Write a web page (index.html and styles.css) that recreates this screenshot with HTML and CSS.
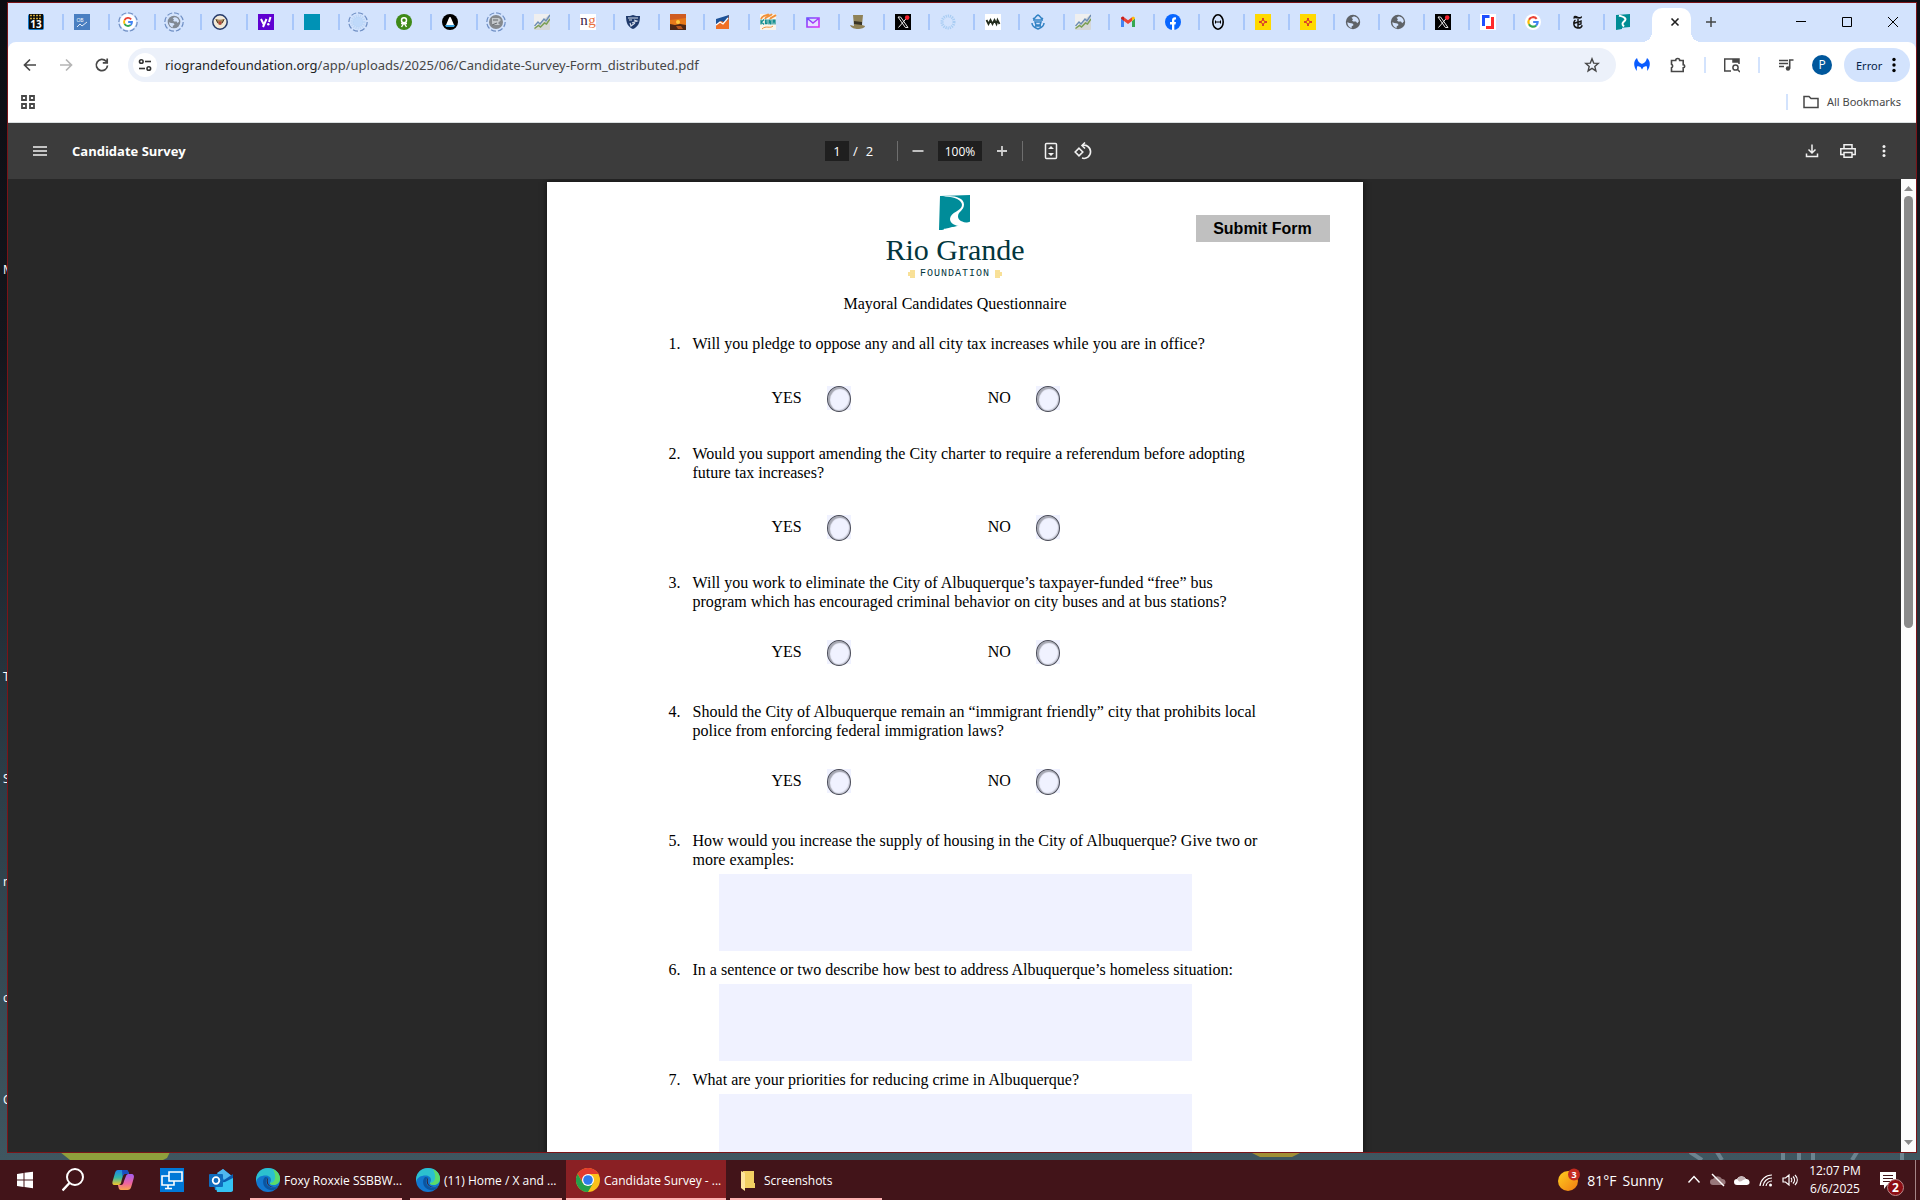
FILE: index.html
```html
<!DOCTYPE html>
<html lang="en">
<head>
  <meta charset="utf-8">
  <title>Candidate Survey</title>
  <link rel="stylesheet" href="styles.css">
</head>
<body>
  <!-- shared icons -->
  <svg class="defs" aria-hidden="true">
    <symbol id="ring" viewBox="0 0 20 20"><circle cx="10" cy="10" r="9.2" fill="none" stroke="#6f8fc4" stroke-width="1.2" stroke-dasharray="5.2 2"/></symbol>
    <symbol id="globe" viewBox="0 0 16 16"><circle cx="8" cy="8" r="7.2" fill="#5f6368"/><path d="M2.3 8.3 4.5 9l3 .4L8.600 11l-2 1.400v1.800C3.900 13.500 2.400 11 2.300 8.300zM8.500 2.500l-2 1.300L8 5.200 7 6.500l1.300 1H11l1.200 1.700 1.600-1.700C13.700 4.700 11.500 2.500 8.500 2.500z" fill="#d3e3fd"/></symbol>
    <symbol id="google" viewBox="0 0 16 16"><g fill="none" stroke-width="2.500"><path d="M12.200 4.400A5.300 5.300 0 0 0 3.400 5.500" stroke="#ea4335"/><path d="M3.400 5.500a5.300 5.300 0 0 0 0 5" stroke="#fbbc05"/><path d="M3.400 10.500a5.300 5.300 0 0 0 8.100 1.600" stroke="#34a853"/><path d="M11.500 12.100A5.300 5.300 0 0 0 13.300 8H8.200" stroke="#4285f4"/></g></symbol>
    <symbol id="chart" viewBox="0 0 16 16"><rect width="16" height="16" rx="1" fill="#d5d7d8"/><path d="M0 0h16L0 14z" fill="#efefef"/><path d="M.5 12 4 8l2 2 4-5 2 2 4-6" fill="none" stroke="#6b8db5" stroke-width="1.400"/><path d="m.5 14.500 4-3 2 1.500 4-4 2 1L16 5" fill="none" stroke="#7b9f55" stroke-width="1.500"/></symbol>
    <symbol id="x" viewBox="0 0 16 16"><rect width="16" height="16"/><path d="M3 3h2.600L13 13.500h-2.600zM12.500 3 3.500 13.500" fill="none" stroke="#e8e8e8"/><circle cx="12.200" cy="3.600" r="2.300" fill="#f4212e"/></symbol>
    <symbol id="zia" viewBox="0 0 16 16"><rect width="16" height="16" fill="#ffd900"/><path d="M8 4v2.500M8 9.500V12M4 8h2.500M9.500 8H12" stroke="#d9432a" stroke-width="2"/><circle cx="8" cy="8" r="1.800" fill="#ffd900" stroke="#d9432a"/></symbol>
    <symbol id="loader" viewBox="0 0 16 16"><circle cx="8" cy="8" r="6" fill="none" stroke="#a9cdf3" stroke-width="3" stroke-dasharray="1.200 .9"/></symbol>
    <symbol id="edge" viewBox="0 0 24 24"><circle cx="12" cy="12" r="12" fill="#1277cf"/><path d="M0 11C.5 4.500 5.500 0 12 0c7 0 12 5 12 10.500 0 4-3 6.500-6.500 6.500-2.500 0-3.500-1-3.500-2 0-.8 1-1.200 1-3C15 9 12.500 7.500 9.500 7.500 5 7.500 1 9.500 0 14z" fill="#2cc0cf"/><path d="M17 1.200C21.300 3.200 24 6.800 24 10.500c0 4-3 6.500-6.500 6.500-2.500 0-3.500-1-3.500-2 5 0 7-6 3-13.800z" fill="#5bdb6a"/><path d="M9 9c-4 4-1.500 12 5 13 3.500.6 6.500-1 8-3-6 2.500-12-.5-12-5.500 0-2 1-3.200 2-3.700C11 9 10 8.700 9 9z" fill="#0b55a0"/><path d="M12.300 9.800c-3 2-1.800 8.700 4.200 9.400 2.800.3 5.200-.3 6.300-1.200-2 1-3.800 1-5.300 1-5 0-7-5-5.200-9.200z" fill="#421419"/></symbol>
  </svg>

  <main class="desktop">
    <span class="shortcut s1">M</span>
    <span class="shortcut s2">T</span>
    <span class="shortcut s3">S</span>
    <span class="shortcut s4">m</span>
    <span class="shortcut s5">c</span>
    <span class="shortcut s6">C</span>
    <svg class="wallpaper" viewBox="0 0 1920 8" preserveAspectRatio="none" aria-hidden="true"><path d="M60 0h110l-3 6-4 2H70z" fill="#8f9f3c"/><path d="M1250 0h52l-10 5h-32z" fill="#a08f35"/><path d="m1690 0 12 8M1717 0l5 8M1783 0v8M1799 0v8M1813 0v8M1857 0l-5 8M1902 0v8" stroke="#6c8490" stroke-width="4"/></svg>

    <div class="window">
      <header class="tabs">
        <div class="tab-list">
          <button class="tab" aria-label="KRQE 13"><svg viewBox="0 0 16 16"><rect width="16" height="16" rx="2" fill="#1378c8"/><rect x="1" width="14" height="15" fill="#0c0c0c"/><path d="M2 1.500h12M2 4.500h12" stroke="#c9a43a" stroke-width="1.500" stroke-dasharray="2 1"/><text x="8" y="14" class="fav" font-size="10" font-weight="bold" fill="#fff">13</text></svg></button>
          <button class="tab" aria-label="Economics"><svg viewBox="0 0 16 16"><rect width="16" height="16" fill="#4a7fc1"/><text x="6" y="8" class="fav" font-size="5" fill="#fff">OB</text><path d="m3 13 3-3 2 2 5-4" fill="none" stroke="#dfe9f6"/></svg></button>
          <button class="tab" aria-label="Google"><svg viewBox="0 0 16 16"><circle cx="8" cy="8" r="8" fill="#fff"/><use href="#google" x="2" y="2" width="12" height="12"/><use href="#ring" x="-2" y="-2" width="20" height="20"/></svg></button>
          <button class="tab" aria-label="Web page"><svg viewBox="0 0 16 16"><use href="#globe" x="1" y="1" width="14" height="14" opacity=".7"/><use href="#ring" x="-2" y="-2" width="20" height="20"/></svg></button>
          <button class="tab" aria-label="House"><svg viewBox="0 0 16 16"><circle cx="8" cy="8" r="7.200" fill="#f3ead9" stroke="#263a68" stroke-width="1.500"/><path d="M3.500 5c2.500 0 3 1 4.500.5 1.500.5 2-.5 4.500-.5L11 8.500 9 11H7L5 8.500z" fill="#a98a5e"/><path d="M4 5.500 6 9M12 5.500 10 9" stroke="#4c3a25"/><path d="M6.700 7.500h2.600v2L8 11l-1.300-1.500z" fill="#b8423c"/></svg></button>
          <button class="tab" aria-label="Yahoo"><svg viewBox="0 0 16 16"><rect width="16" height="16" fill="#5f01d1"/><path d="m3 5 2.500 5M8.500 5 5 13" stroke="#fff" stroke-width="2"/><path d="m12.500 3-1.500 5" stroke="#fff" stroke-width="2"/><circle cx="10.300" cy="10.300" r="1.200" fill="#fff"/></svg></button>
          <button class="tab" aria-label="News"><svg viewBox="0 0 16 16"><rect width="16" height="16" fill="#0092b5"/></svg></button>
          <button class="tab" aria-label="Loading"><svg viewBox="0 0 16 16"><circle cx="8" cy="8" r="5" fill="#bfd9fa"/><use href="#loader" width="16" height="16" opacity=".5"/><use href="#ring" x="-2" y="-2" width="20" height="20"/></svg></button>
          <button class="tab" aria-label="Ballot"><svg viewBox="0 0 16 16"><circle cx="8" cy="8" r="8" fill="#3f8a18"/><circle cx="8" cy="6.200" r="2.500" fill="none" stroke="#fff" stroke-width="1.500"/><path d="M5 9.500h6M8 9l-2.500 4M8 9l2.500 4" stroke="#fff" stroke-width="1.400"/></svg></button>
          <button class="tab" aria-label="Capitol"><svg viewBox="0 0 16 16"><circle cx="8" cy="8" r="8"/><path d="M7.500 3h1l1 2 2.500 6H4l2.500-6z" fill="#fff"/><path d="M3 11h10l-1 2H4z" fill="#3aa2de"/></svg></button>
          <button class="tab" aria-label="Report"><svg viewBox="0 0 16 16"><circle cx="8" cy="8" r="7" fill="#85898d"/><path d="M4 4h7l2 2-3 3 2 2H4z" fill="#c4c8cb"/><path d="M5 6h5M4 11l5-2" stroke="#62666a"/><use href="#ring" x="-2" y="-2" width="20" height="20"/></svg></button>
          <button class="tab" aria-label="Stocks"><svg><use href="#chart"/></svg></button>
          <button class="tab" aria-label="NG"><svg viewBox="0 0 16 16"><rect width="16" height="16" fill="#fff"/><text x="4" y="11" class="fav serif" font-size="15" fill="#3a2346">n</text><text x="12" y="11" class="fav serif" font-size="15" fill="#e8703d">g</text></svg></button>
          <button class="tab" aria-label="Shield"><svg viewBox="0 0 16 16"><path d="M1 2c3 0 5 0 7-1 2 1 4 1 7 1 0 7-2 11-7 13C3 13 1 9 1 2z" fill="#1f3a6b"/><path d="M3 4h10M4 6h3M9 6l3 1-5 2M5 9l1 3 4-3" fill="none" stroke="#d6deec" stroke-width="1.200"/></svg></button>
          <button class="tab" aria-label="Sunset"><svg viewBox="0 0 16 16"><rect width="16" height="16" fill="#e7791b"/><path d="M0 0h16v4L0 6z" fill="#cf5c22"/><circle cx="8" cy="8" r="2" fill="#ffc93e"/><path d="M0 10l5 1 5-1 6 1v5H0z" fill="#4d2716"/><path d="M6 12h5l2 3H8z" fill="#b75620"/></svg></button>
          <button class="tab" aria-label="Growth"><svg viewBox="0 0 16 16"><path d="M1 7 14 1v14H1z" fill="#ef7027"/><path d="M1 5 14 1l-1 5-4 2-3-1-5 4z" fill="#1d5298"/><path d="m1 11 4-3 3 2 5-6" fill="none" stroke="#fff" stroke-width="1.300"/></svg></button>
          <button class="tab" aria-label="KUNM"><svg viewBox="0 0 16 16"><rect width="16" height="16" fill="#fbf5ea"/><path d="M1 5C3 0 8 2 9 0M5 5c1-3 5-2 7-5M10 5c1-2 4-2 6-4" fill="none" stroke="#f0913a" stroke-width="1.800"/><path d="M1 5.500v5M1.500 8 4 5.500M1.500 8 4 10.500M5.500 5.500v4h1.500v-4M9 10.500v-5l2 5v-5M13 10.500v-5l1 2 1-2v5" fill="none" stroke="#138f92" stroke-width="1.300"/><path d="M2 15c4-4 8 0 11-3" fill="none" stroke="#f0913a"/></svg></button>
          <button class="tab" aria-label="Mail"><svg viewBox="0 0 16 16"><defs><linearGradient id="mail" x2="1" y2="1"><stop stop-color="#6a4bff"/><stop offset="1" stop-color="#e02ff5"/></linearGradient></defs><path d="M2 4h12v9H2zM3 5l5 4 5-4" fill="#e6e0ff" stroke="url(#mail)" stroke-width="1.600"/></svg></button>
          <button class="tab" aria-label="Top hat"><svg viewBox="0 0 16 16"><path d="M3 1h10l-1 10 3 1c0 2-4 3-7 3s-7-1-8-4l4 1z" fill="#8f8257"/><path d="m4 7 8 1v3l-8-1z" fill="#383426"/></svg></button>
          <button class="tab" aria-label="X"><svg><use href="#x"/></svg></button>
          <button class="tab" aria-label="Loading"><svg><use href="#loader"/></svg></button>
          <button class="tab" aria-label="W"><svg viewBox="0 0 16 16"><rect width="16" height="16" fill="#fff"/><path d="m1.500 6 2 4 2-4 2 4 2-4 2 4 1-4 2 4" fill="none" stroke="#222c1c" stroke-width="1.800"/></svg></button>
          <button class="tab" aria-label="State"><svg viewBox="0 0 16 16"><path d="M3 4c2 2 2-2 5-3 3 1 3 5 5 3M3 6h10M2 9c0 4 4 5 6 6 2-1 6-2 6-6M5 8h6l-1 3H6zM5 12h6" fill="none" stroke="#3182c4" stroke-width="1.500"/></svg></button>
          <button class="tab" aria-label="Stocks"><svg><use href="#chart"/></svg></button>
          <button class="tab" aria-label="Gmail"><svg viewBox="0 0 16 16"><path d="M1 4.500V13h3V7z" fill="#4285f4"/><path d="M12 7v6h3V4.500z" fill="#34a853"/><path d="M1 4.500C1 3 3 2.300 4 3.200l4 3 4-3L12 7l-4 3-4-3v0z" fill="#ea4335"/><path d="M12 3.200c1-.9 3-.2 3 1.300L12 7z" fill="#fbbc04"/><path d="M4 3.200C3 2.300 1 3 1 4.500L4 7z" fill="#c5221f"/></svg></button>
          <button class="tab" aria-label="Facebook"><svg viewBox="0 0 16 16"><circle cx="8" cy="8" r="8" fill="#0866ff"/><path d="M7 16v-5.500H5V8h2V6.500C7 4 8.500 3 11 3.400v2.100C9.700 5.400 9.300 5.700 9.300 6.800V8H11l-.5 2.500H9.300V16z" fill="#fff"/></svg></button>
          <button class="tab" aria-label="Theta"><svg viewBox="0 0 16 16"><ellipse cx="8" cy="8" rx="5.200" ry="7.200" fill="none" stroke="#000" stroke-width="1.600"/><path d="M5.500 8h5" stroke="#000"/><path d="M5.500 6.500v3M10.500 6.500v3" stroke="#000"/></svg></button>
          <button class="tab" aria-label="New Mexico"><svg><use href="#zia"/></svg></button>
          <button class="tab" aria-label="New Mexico"><svg><use href="#zia"/></svg></button>
          <button class="tab" aria-label="Web page"><svg><use href="#globe"/></svg></button>
          <button class="tab" aria-label="Web page"><svg><use href="#globe"/></svg></button>
          <button class="tab" aria-label="X"><svg><use href="#x"/></svg></button>
          <button class="tab" aria-label="Brackets"><svg viewBox="0 0 16 16"><rect width="16" height="16" fill="#fff"/><path d="M9.500 2.500h-6v9.500" fill="none" stroke="#1f4fff" stroke-width="3"/><path d="M12.500 3v10.500H6" fill="none" stroke="#ff2a2a" stroke-width="3"/></svg></button>
          <button class="tab" aria-label="Google"><svg viewBox="0 0 16 16"><circle cx="8" cy="8" r="8" fill="#fff"/><use href="#google" x="1" y="1" width="14" height="14"/></svg></button>
          <button class="tab" aria-label="New York Times"><svg viewBox="0 0 16 16"><path d="M3.500 3c1-2 3-1 4.500-.3 1.500.6 3 .6 4-.7.3 2-1 3-3 2.700C7 4.300 4.500 3.500 3.500 5z" fill="#151515"/><path d="M5.500 6C3 7.500 3 13.500 7.500 14c2.500.3 4.200-1 4.700-2.800M8 5v9M8 8.300l3-1.300v3l-3 .7M3.500 9.500 8 8" fill="none" stroke="#151515" stroke-width="1.400"/></svg></button>
          <button class="tab last" aria-label="Rio Grande Foundation"><svg viewBox="0 0 16 16"><path d="M1 1 15 0v13l-8 .7L7 15l-6 1z" fill="#008c95"/><path d="M4 1.500c3 1 8 2 6 5-2 2-4 3-1 6" fill="none" stroke="#fff" stroke-width="2"/></svg></button>
        </div>
        <div class="tab-active"><button class="plain" aria-label="Close tab"><svg class="i10" viewBox="0 0 10 10"><path d="m1.500 1.500 7 7m0-7-7 7" stroke="#1f1f1f" stroke-width="1.600"/></svg></button></div>
        <button class="plain new-tab" aria-label="New tab"><svg class="i10" viewBox="0 0 10 10"><path d="M5 0v10M0 5h10" stroke="#444746" stroke-width="1.500"/></svg></button>
        <div class="window-controls">
          <button class="plain" aria-label="Minimize"><svg class="i10" viewBox="0 0 10 10"><path d="M0 4.500h10" stroke="#000"/></svg></button>
          <button class="plain" aria-label="Maximize"><svg class="i10" viewBox="0 0 10 10"><path d="M.5.5h9v9h-9z" fill="none" stroke="#000"/></svg></button>
          <button class="plain" aria-label="Close"><svg class="i10" viewBox="0 0 10 10"><path d="m0 0 10 10M10 0 0 10" stroke="#000"/></svg></button>
        </div>
      </header>

      <div class="browser-bar">
        <nav class="toolbar">
          <button class="tool" aria-label="Back"><svg viewBox="0 0 16 16"><path d="M14 8H3M8 2.500 2.500 8 8 13.500" fill="none" stroke="#474747" stroke-width="1.700"/></svg></button>
          <button class="tool" aria-label="Forward"><svg viewBox="0 0 16 16"><path d="M2 8h11M8 2.500 13.500 8 8 13.500" fill="none" stroke="#b5b5b5" stroke-width="1.700"/></svg></button>
          <button class="tool" aria-label="Reload"><svg viewBox="0 0 16 16"><path d="M13.500 8.500A5.600 5.600 0 1 1 12 4.200l1 1M13.200 1.500v4.300H8.800" fill="none" stroke="#474747" stroke-width="1.700"/></svg></button>
          <div class="omnibox">
            <button class="site-info" aria-label="Site information"><svg viewBox="0 0 16 16"><g fill="none" stroke="#333" stroke-width="1.600"><circle cx="4.300" cy="4.500" r="1.800"/><path d="M8 4.500h6"/><circle cx="11.800" cy="11.500" r="1.800"/><path d="M2 11.500h6"/></g></svg></button>
            <span class="url"><b>riograndefoundation.org</b>/app/uploads/2025/06/Candidate-Survey-Form_distributed.pdf</span>
            <button class="tool" aria-label="Bookmark this tab"><svg viewBox="0 0 16 16"><path d="m8 1.800 1.700 4.300 4.600.3-3.500 3 1.100 4.500L8 11.400l-3.900 2.500 1.100-4.500-3.500-3 4.600-.3z" fill="none" stroke="#474747" stroke-width="1.400"/></svg></button>
          </div>
          <button class="tool" aria-label="Malwarebytes"><svg viewBox="0 0 16 16"><path d="M3 1c1 4 3 5 5 6 2-1 4-2 5-6 4 3 3.500 9 0 13 .4-2 .2-4-.6-5L9.500 10 8 12.500 6.500 10 3.600 9c-.8 1-1 3-.6 5C-.5 10-1 4 3 1z" fill="#0a5cff"/></svg></button>
          <button class="tool" aria-label="Extensions"><svg viewBox="0 0 16 16"><path d="M1.500 3.500h4.200a2 2 0 0 1 4 0h3.500v4.200a1.500 1.500 0 0 1 0 3v3.800H1.500v-3.700a2 2 0 0 0 0-3.600z" fill="none" stroke="#474747" stroke-width="1.600"/></svg></button>
          <span class="sep"></span>
          <button class="tool" aria-label="Side panel search"><svg viewBox="0 0 16 16"><path d="M7 14H.7V2H15v5M9 2v3h6" fill="none" stroke="#474747" stroke-width="1.500"/><path d="M9 2h6v3H9z" fill="#474747"/><circle cx="11.500" cy="10.500" r="2.600" fill="none" stroke="#474747" stroke-width="1.500"/><path d="m13.500 12.500 2.500 2.500" stroke="#474747" stroke-width="1.500"/></svg></button>
          <span class="sep"></span>
          <button class="tool" aria-label="Media controls"><svg viewBox="0 0 16 16"><path d="M1 3.500h9M1 6.500h9M1 9.500h5" stroke="#474747" stroke-width="1.500"/><circle cx="10" cy="11.500" r="2.200" fill="#474747"/><path d="M11.700 11.500V3h3.800" fill="none" stroke="#474747" stroke-width="1.600"/></svg></button>
          <button class="tool" aria-label="Profile"><span class="avatar">P</span></button>
          <button class="error">Error <svg viewBox="0 0 4 16"><circle cx="2" cy="2.500" r="1.700"/><circle cx="2" cy="8" r="1.700"/><circle cx="2" cy="13.500" r="1.700"/></svg></button>
        </nav>
        <nav class="bookmarks">
          <button class="plain" aria-label="Apps"><svg class="i14" viewBox="0 0 14 14"><path d="M1 1h4v4H1zM9 1h4v4H9zM1 9h4v4H1zM9 9h4v4H9z" fill="none" stroke="#474747" stroke-width="1.800"/></svg></button>
          <button class="all-bookmarks"><svg viewBox="0 0 16 14"><path d="M1 12.500V1.500h5l2 2h7v9z" fill="none" stroke="#474747" stroke-width="1.500"/></svg>All Bookmarks</button>
        </nav>
      </div>

      <div class="pdf-bar">
        <div class="pdf-title">
          <button class="plain" aria-label="Menu"><svg class="i14" viewBox="0 0 14 14"><path d="M0 3h14M0 7h14M0 11h14" stroke="#f1f1f1" stroke-width="1.500"/></svg></button>
          <h1>Candidate Survey</h1>
        </div>
        <div class="pdf-center">
          <input class="box page-no" type="text" value="1" aria-label="Page number">
          <span class="page-count"><span>/</span><span>2</span></span>
          <span class="line"></span>
          <button class="pdf-btn minus" aria-label="Zoom out"><svg viewBox="0 0 20 20"><path d="M4.500 10h11" stroke="#d0d0d0" stroke-width="1.800"/></svg></button>
          <input class="box zoom" type="text" value="100%" aria-label="Zoom level">
          <button class="pdf-btn plus" aria-label="Zoom in"><svg viewBox="0 0 20 20"><path d="M5 10h10M10 5v10" stroke="#d0d0d0" stroke-width="1.800"/></svg></button>
          <span class="line wide"></span>
          <button class="pdf-btn" aria-label="Fit to page"><svg viewBox="0 0 20 20"><rect x="4.500" y="2.500" width="11" height="15" rx="1" fill="none" stroke="#f1f1f1" stroke-width="1.500"/><path d="m7 8 3-3 3 3zM7 12l3 3 3-3z" fill="#f1f1f1"/></svg></button>
          <button class="pdf-btn" aria-label="Rotate"><svg viewBox="0 0 20 20"><path d="m6 7.200 3.800 3.800L6 14.800 2.200 11z" fill="none" stroke="#f1f1f1" stroke-width="1.600"/><path d="M9 4.500a6.600 6.600 0 1 1 0 12.600M12 1.500l-3 3 3 3" fill="none" stroke="#f1f1f1" stroke-width="1.600"/></svg></button>
        </div>
        <div class="pdf-actions">
          <button class="tool" aria-label="Download"><svg viewBox="0 0 16 16"><path d="M8 1.500v8M4.500 6.500 8 10l3.500-3.500M2.500 10.500v3h11v-3" fill="none" stroke="#f1f1f1" stroke-width="1.500"/></svg></button>
          <button class="tool" aria-label="Print"><svg viewBox="0 0 16 16"><path d="M4 5V1.700h8V5M4 11.500H.8V5.700h14.400v5.800H12M4 9.500h8v4.800H4z" fill="none" stroke="#f1f1f1" stroke-width="1.500"/></svg></button>
          <button class="tool" aria-label="More actions"><svg viewBox="0 0 16 16" fill="#f1f1f1"><circle cx="8" cy="3.500" r="1.500"/><circle cx="8" cy="8" r="1.500"/><circle cx="8" cy="12.500" r="1.500"/></svg></button>
        </div>
      </div>

      <div class="viewer">
        <div class="pages">
          <form class="page">
            <div class="page-head">
              <div class="logo">
                <svg class="logo-mark" viewBox="0 0 31 35"><path d="M1 1 31 0v27l-16 5-2 0 0 1.500-8 .2L5 35H0z" fill="#008c99"/><path d="M31 26.500V35H3l10-3 12-.8z" fill="#fff"/><path d="M4 1.500C15 1 23 5 23 10c0 6-12 7-12 14 0 5 7 8 14 7l6-3.500c-7 .5-12-2-12-6 0-5 6-6 6-12C25 3 15 0 4 1.500z" fill="#fff"/></svg>
                <span class="logo-name">Rio Grande</span>
                <span class="logo-sub">
                  <svg viewBox="0 0 7 8"><path d="M2 1h5M0 3h7M0 5h7M2 7h5" stroke="#f2c230"/></svg>
                  <span>FOUNDATION</span>
                  <svg viewBox="0 0 7 8"><path d="M0 1h5M0 3h7M0 5h7M0 7h5" stroke="#f2c230"/></svg>
                </span>
              </div>
              <button class="submit" type="button">Submit Form</button>
            </div>
            <h2>Mayoral Candidates Questionnaire</h2>
            <ol class="questions">
              <li><p>Will you pledge to oppose any and all city tax increases while you are in office?</p>
                <div class="answer"><label>YES <input type="radio" name="q1"></label><label>NO <input type="radio" name="q1"></label></div></li>
              <li><p>Would you support amending the City charter to require a referendum before adopting future tax increases?</p>
                <div class="answer"><label>YES <input type="radio" name="q2"></label><label>NO <input type="radio" name="q2"></label></div></li>
              <li><p>Will you work to eliminate the City of Albuquerque’s taxpayer-funded “free” bus program which has encouraged criminal behavior on city buses and at bus stations?</p>
                <div class="answer"><label>YES <input type="radio" name="q3"></label><label>NO <input type="radio" name="q3"></label></div></li>
              <li><p>Should the City of Albuquerque remain an “immigrant friendly” city that prohibits local police from enforcing federal immigration laws?</p>
                <div class="answer"><label>YES <input type="radio" name="q4"></label><label>NO <input type="radio" name="q4"></label></div></li>
              <li><label for="q5">How would you increase the supply of housing in the City of Albuquerque? Give two or more examples:</label>
                <textarea id="q5"></textarea></li>
              <li><label for="q6">In a sentence or two describe how best to address Albuquerque’s homeless situation:</label>
                <textarea id="q6"></textarea></li>
              <li><label for="q7">What are your priorities for reducing crime in Albuquerque?</label>
                <textarea id="q7"></textarea></li>
            </ol>
          </form>
        </div>
        <div class="scrollbar">
          <svg viewBox="0 0 15 17"><path d="M3 12h9L7.500 7z" fill="#8b8b8b"/></svg>
          <div class="track"><div class="thumb"></div></div>
          <svg viewBox="0 0 15 17"><path d="M3 5h9l-4.500 5z" fill="#8b8b8b"/></svg>
        </div>
      </div>
    </div>
  </main>

  <footer class="taskbar">
    <button class="task-icon" aria-label="Start"><svg viewBox="0 0 24 24"><path d="m4 6 6.500-1v6.500H4zM11.500 4.800 20 3.700v7.800h-8.500zM4 12.500h6.500V19L4 18zM11.500 12.500H20v7.800l-8.500-1.200z" fill="#fff"/></svg></button>
    <button class="task-icon" aria-label="Search"><svg viewBox="0 0 24 24"><circle cx="13" cy="9" r="8" fill="none" stroke="#fff" stroke-width="2"/><path d="m7.500 15-7 7.500" stroke="#fff" stroke-width="2.400"/></svg></button>
    <button class="task-icon" aria-label="Copilot"><svg viewBox="0 0 24 24"><defs><linearGradient id="cp1" x2="0" y2="1"><stop stop-color="#1c86e8"/><stop offset=".5" stop-color="#35b8a4"/><stop offset="1" stop-color="#f5c52a"/></linearGradient><linearGradient id="cp2" x2="0" y2="1"><stop stop-color="#a35df0"/><stop offset=".6" stop-color="#f0659c"/><stop offset="1" stop-color="#f8a44c"/></linearGradient></defs><path d="M7 2h8c2 0 2.500 2 3 4h-4c-2 0-2 2-3 5l-1 4c-1 2-2 2-4 2H4c-3 0-3-2-2-5l2-7c.6-2 1.500-3 3-3z" fill="url(#cp1)"/><path d="M18 6h2c3 0 3.500 2 2.500 5l-2 7c-.8 3-2 4-4 4H10c-2 0-2.500-2-3-5h3c2 0 2.500-2 3-4l2-5c.5-1.500 1.500-2 3-2z" fill="url(#cp2)"/><path d="M11 2h4c2 0 2.500 2 3 4h-4c-2 0-2 2-2.500 3z" fill="#1b4dbf"/></svg></button>
    <button class="task-icon" aria-label="Remote desktop"><svg viewBox="0 0 24 24"><rect width="24" height="24" fill="#0078d7"/><path d="M2 8h12v9H2zM8 17v3M5 20.500h7" fill="none" stroke="#fff" stroke-width="1.600"/><path d="M9 4h13v9H9z" fill="#0078d7" stroke="#fff" stroke-width="1.600"/></svg></button>
    <button class="task-icon" aria-label="Outlook"><svg viewBox="0 0 24 24"><path d="M4 9 14 1l10 8v13H6z" fill="#1490df"/><path d="M8 5 14 1l10 8-6 5z" fill="#50b8f0"/><path d="M12 14 24 6v17H8z" fill="#0a5cb0"/><path d="m6 15 10-1 8-4v12c0 1-1 2-2 2H8z" fill="#35c3f3"/><rect y="6" width="14" height="13" rx="1" fill="#0f6cbd"/><circle cx="7" cy="12.500" r="3.300" fill="none" stroke="#fff" stroke-width="1.800"/></svg></button>
    <div class="apps">
      <button class="app"><svg><use href="#edge"/></svg>Foxy Roxxie SSBBW...</button>
      <button class="app"><svg><use href="#edge"/></svg>(11) Home / X and ...</button>
      <button class="app current"><svg viewBox="0 0 24 24"><circle cx="12" cy="12" r="12" fill="#fbc11a"/><path d="M1.600 6A12 12 0 0 1 22.400 6H12l-5 9z" fill="#e33b2e"/><path d="M1.600 6A12 12 0 0 0 12 24l5.200-9H6.800z" fill="#25a04b"/><circle cx="12" cy="12" r="6" fill="#fff"/><circle cx="12" cy="12" r="4.800" fill="#2f7bea"/></svg>Candidate Survey - ...</button>
      <button class="app"><svg viewBox="0 0 24 24"><path d="M7 3h11v12h1v5H7z" fill="#f3cf62"/><path d="m5 3 4 2v18l-4-3z" fill="#ffe59c"/></svg>Screenshots</button>
    </div>
    <div class="tray">
      <button class="weather"><svg viewBox="0 0 24 24"><defs><linearGradient id="sun" x2="1" y2="1"><stop stop-color="#ffce1f"/><stop offset="1" stop-color="#f07c12"/></linearGradient></defs><circle cx="11" cy="13" r="10" fill="url(#sun)"/><circle cx="17" cy="6.500" r="6" fill="#c42b20"/><text x="17" y="9.500" class="fav" font-size="9" font-weight="bold" fill="#fff">3</text></svg><span>81°F</span><span>Sunny</span></button>
      <div class="tray-icons">
        <svg viewBox="0 0 16 16"><path d="m2.500 10.500 5.500-6 5.500 6" fill="none" stroke="#fff" stroke-width="1.400"/></svg>
        <svg viewBox="0 0 16 16"><path d="M3 13a3 3 0 0 1 0-6 5 5 0 0 1 9 0 3 3 0 0 1 1 6z" fill="#98787b"/><path d="m2 2 12 12" stroke="#fff" stroke-width="1.400"/></svg>
        <svg viewBox="0 0 16 16"><path d="M3 13a3 3 0 0 1 0-6 5 5 0 0 1 9 0 3 3 0 0 1 1 6z" fill="#fff"/><path d="M3 7a5 5 0 0 1 9 0c-3 0-4 3-7 2.500z" fill="#c5b5b7"/></svg>
        <svg viewBox="0 0 16 16"><g fill="none" stroke="#fff" stroke-width="1.200"><path d="M2 14A12 12 0 0 1 14 3M5 14a9 9 0 0 1 9-8M8 14a6 6 0 0 1 6-5"/></g><circle cx="12.500" cy="13" r="1.500" fill="#fff"/></svg>
        <svg viewBox="0 0 16 16"><path d="M1 6h2.500L7 3v10l-3.500-3H1zM9 6c1 1 1 3 0 4M11 4.500c2 2 2 5 0 7M13 3c3 3 3 7 0 10" fill="none" stroke="#fff" stroke-width="1.200"/></svg>
      </div>
      <div class="clock">12:07 PM<br>6/6/2025</div>
      <button class="notices" aria-label="Notifications"><svg viewBox="0 0 24 24"><path d="M0 0h16v13H7l-3 4v-4H0z" fill="#fff"/><path d="M3 3.500h10M3 6.500h10M3 9.500h7" stroke="#421419" stroke-width="1.200"/><circle cx="15.500" cy="15.500" r="8" fill="#8d0d13" stroke="#b9898c"/><text x="15.500" y="20" class="fav" font-size="12" font-weight="bold" fill="#fff">2</text></svg></button>
    </div>
  </footer>
</body>
</html>
```
FILE: styles.css
```css
* {
  box-sizing: border-box;
}

body {
  margin: 0;
  height: 100vh;
  display: flex;
  flex-direction: column;
  overflow: hidden;
  font-family: "Open Sans", "Noto Sans", sans-serif;
  font-size: 12px;
}

button {
  border: 0;
  padding: 0;
  background: none;
  font: inherit;
  color: inherit;
}

svg {
  display: block;
  flex: none;
}

.defs {
  position: absolute;
  width: 0;
  height: 0;
}

.fav {
  font-family: "Open Sans", sans-serif;
  text-anchor: middle;
}

.fav.serif {
  font-family: "Liberation Serif", serif;
}

/* desktop */
.desktop {
  flex: 1;
  min-height: 0;
  position: relative;
  display: flex;
  padding: 2px 3px 7px 7px;
  background: linear-gradient(#0b0c12, #14161c 30%, #2b3b45 65%, #3f5660);
}

.shortcut {
  position: absolute;
  left: 3px;
  color: #fff;
  line-height: 16px;
}

.s1 { top: 262px; }
.s2 { top: 669px; }
.s3 { top: 771px; }
.s4 { top: 874px; }
.s5 { top: 990px; }
.s6 { top: 1092px; }

.wallpaper {
  position: absolute;
  left: 0;
  bottom: 0;
  width: 100%;
  height: 8px;
}

.window {
  position: relative;
  flex: 1;
  min-width: 0;
  display: flex;
  flex-direction: column;
  border: 1px solid #7a1418;
  background: #282828;
}

/* tab strip */
.tabs {
  height: 39px;
  display: flex;
  align-items: center;
  padding: 0 0 1px 10px;
  background: #d3e3fd;
}

.tab-list {
  display: flex;
}

.tab {
  width: 45px;
  height: 16px;
  padding-left: 10px;
  border-right: 2px solid #a8c7fa;
}

.tab:nth-child(-n+12) {
  width: 46px;
}

.tab.last {
  border-right-color: transparent;
}

.tab svg {
  width: 16px;
  height: 16px;
  overflow: visible;
}

.plain {
  display: flex;
  align-items: center;
  justify-content: center;
}

.i10 {
  width: 10px;
  height: 10px;
}

.i14 {
  width: 14px;
  height: 14px;
}

.tab-active {
  position: relative;
  align-self: flex-end;
  width: 39px;
  height: 34px;
  margin: 0 0 -1px 2px;
  padding: 9px 0 0 18px;
  border-radius: 10px 10px 0 0;
  background: #fff;
}

.tab-active::before,
.tab-active::after {
  content: "";
  position: absolute;
  bottom: 0;
  left: -10px;
  width: 10px;
  height: 10px;
  background: radial-gradient(circle at 0 0, transparent 10px, #fff 10px);
}

.tab-active::after {
  left: 100%;
  background: radial-gradient(circle at 100% 0, transparent 10px, #fff 10px);
}

.new-tab {
  width: 40px;
}

.window-controls {
  margin-left: auto;
  display: flex;
}

.window-controls .plain {
  width: 46px;
}

/* address bar */
.browser-bar {
  background: linear-gradient(#d3e3fd 10px, #fff 10px);
  border-bottom: 1px solid #dadfe0;
}

.toolbar {
  height: 46px;
  display: flex;
  align-items: center;
  padding: 0 6px 0 4px;
  border-radius: 8px 8px 0 0;
  background: #fff;
}

.tool {
  width: 36px;
  height: 34px;
  display: flex;
  align-items: center;
  justify-content: center;
}

.tool svg {
  width: 16px;
  height: 16px;
}

.omnibox {
  flex: 1;
  display: flex;
  align-items: center;
  height: 34px;
  margin: 0 8px;
  padding: 0 6px 0 5px;
  border-radius: 17px;
  background: #ecf1fa;
}

.site-info {
  width: 24px;
  height: 24px;
  display: flex;
  align-items: center;
  justify-content: center;
  border-radius: 50%;
  background: #fff;
}

.site-info svg {
  width: 16px;
  height: 16px;
}

.url {
  flex: 1;
  padding-left: 8px;
  font-family: "Noto Sans", sans-serif;
  font-size: 13px;
  line-height: 18px;
  color: #474747;
}

.url b {
  font-weight: normal;
  color: #1f1f1f;
}

.sep {
  width: 2px;
  height: 16px;
  margin: 0 8px;
  background: #d3e3fd;
}

.avatar {
  width: 20px;
  height: 20px;
  line-height: 20px;
  border-radius: 50%;
  background: #00579c;
  color: #fff;
}

.error {
  height: 34px;
  width: 66px;
  margin-left: 4px;
  padding-left: 12px;
  display: flex;
  align-items: center;
  gap: 10px;
  border-radius: 17px;
  background: #d3e3fd;
  color: #041e49;
  font-family: "Noto Sans", sans-serif;
  font-size: 11px;
}

.error svg {
  width: 4px;
  height: 16px;
}

.bookmarks {
  height: 34px;
  display: flex;
  align-items: center;
  justify-content: space-between;
  padding: 0 15px 6px 13px;
}

.all-bookmarks {
  display: flex;
  align-items: center;
  gap: 8px;
  padding-left: 15px;
  border-left: 2px solid #d3e3fd;
  font-family: "Noto Sans", sans-serif;
  font-size: 11px;
  line-height: 16px;
  color: #474747;
}

.all-bookmarks svg {
  width: 16px;
  height: 14px;
}

/* pdf toolbar */
.pdf-bar {
  height: 56px;
  display: grid;
  grid-template-columns: 1fr auto 1fr;
  align-items: center;
  background: #3c3c3c;
  color: #fff;
}

.pdf-title {
  display: flex;
  align-items: center;
  gap: 25px;
  padding-left: 25px;
}

.pdf-title h1 {
  margin: 0;
  font-size: 13px;
  font-weight: bold;
}

.pdf-center {
  display: flex;
  align-items: center;
  font-size: 13px;
}

.box {
  height: 20px;
  padding: 0;
  border: 0;
  background: #1f1f1f;
  color: #fff;
  font: inherit;
  text-align: center;
}

.page-no {
  width: 24px;
}

.zoom {
  width: 44px;
  font-size: 12px;
}

.page-count {
  width: 48px;
  padding-left: 4px;
  display: flex;
  gap: 8px;
}

.line {
  width: 1px;
  height: 20px;
  margin-right: 4px;
  background: #6e6e6e;
}

.line.wide {
  margin: 0 12px 0 4px;
}

.pdf-btn {
  width: 32px;
  display: flex;
  justify-content: center;
}

.minus {
  margin-right: 4px;
}

.plus {
  margin-left: 4px;
}

.pdf-btn svg {
  width: 20px;
  height: 20px;
}

.pdf-actions {
  display: flex;
  justify-content: flex-end;
  padding-right: 14px;
}

/* document */
.viewer {
  flex: 1;
  min-height: 0;
  display: flex;
}

.pages {
  flex: 1;
  overflow: hidden;
  padding-top: 3px;
}

.page {
  width: 816px;
  min-height: 1056px;
  margin: 0 auto;
  padding: 13px 0 0 1px;
  background: #fff;
  box-shadow: 0 0 6px #111;
  color: #000;
  font-family: "Liberation Serif", serif;
  font-size: 16px;
  line-height: 19px;
}

.page-head {
  display: grid;
  grid-template-columns: 1fr auto 1fr;
  align-items: start;
  padding: 0 33px;
}

.logo {
  grid-column: 2;
  display: flex;
  flex-direction: column;
  align-items: center;
}

.logo-mark {
  width: 31px;
  height: 35px;
}

.logo-name {
  margin-top: 4px;
  font-size: 30px;
  line-height: 32px;
  color: #03363d;
}

.logo-sub {
  display: flex;
  align-items: center;
  gap: 5px;
  margin-top: 3px;
  font-family: "Liberation Mono", monospace;
  font-size: 10px;
  line-height: 10px;
  letter-spacing: 1px;
  color: #03363d;
}

.logo-sub svg {
  width: 7px;
  height: 8px;
}

.submit {
  justify-self: end;
  width: 134px;
  height: 27px;
  margin-top: 20px;
  background: #c0c0c0;
  font-family: "Liberation Sans", sans-serif;
  font-size: 16px;
  font-weight: bold;
}

.page h2 {
  margin: 15px 0 21px;
  font-size: 16px;
  font-weight: normal;
  text-align: center;
}

.questions {
  margin: 0;
  padding: 0 96px 0 121px;
  list-style: none;
  counter-reset: q;
}

.questions li {
  counter-increment: q;
  display: grid;
  grid-template-columns: 24px 1fr;
}

.questions li::before {
  content: counter(q) ".";
}

.questions p {
  margin: 0;
}

.answer {
  grid-column: 2;
  height: 91px;
  padding: 33px 0 0 79px;
  display: flex;
  align-items: flex-start;
  gap: 137px;
}

.questions li:nth-child(n+3) .answer {
  padding-top: 29px;
}

.answer label {
  display: flex;
  gap: 25px;
  line-height: 24px;
}

.answer input {
  appearance: none;
  width: 24px;
  height: 24px;
  margin: 0;
  background: #f0f2ff;
}

.answer input::before {
  content: "";
  display: block;
  height: 24px;
  border: 1px solid #4a4c58;
  border-radius: 50%;
  box-shadow: inset 1px 1px 1px 1px #a5a7b2, inset -1px -1px 1px #c9cbd8;
}

.questions textarea {
  grid-column: 2;
  width: 473px;
  height: 77px;
  margin: 5px 0 9px 26px;
  border: 0;
  resize: none;
  background: #f0f2ff;
}

.scrollbar {
  width: 15px;
  display: flex;
  flex-direction: column;
  background: #fcfcfc;
}

.scrollbar svg {
  width: 15px;
  height: 17px;
}

.track {
  flex: 1;
  padding: 0 3px;
}

.thumb {
  height: 46%;
  border-radius: 5px;
  background: #8b8b8b;
}

/* taskbar */
.taskbar {
  height: 40px;
  display: flex;
  background: #421419;
  color: #fff;
}

.task-icon {
  width: 49px;
  display: flex;
  align-items: center;
  justify-content: center;
}

.task-icon svg,
.app svg,
.weather svg,
.notices svg {
  width: 24px;
  height: 24px;
}

.apps {
  display: flex;
  margin-left: 1px;
}

.app {
  position: relative;
  width: 160px;
  display: flex;
  align-items: center;
  gap: 4px;
  padding-left: 10px;
  white-space: nowrap;
}

.app::after {
  content: "";
  position: absolute;
  left: 4px;
  right: 4px;
  bottom: 0;
  height: 2px;
  background: #ffb3b3;
}

.app.current {
  background: #8a2024;
}

.app.current::after {
  left: 0;
  right: 0;
}

.tray {
  margin-left: auto;
  display: flex;
  align-items: center;
  padding-right: 4px;
}

.weather {
  display: flex;
  align-items: center;
  gap: 6px;
  font-size: 14px;
}

.tray-icons {
  display: flex;
  gap: 8px;
  margin-left: 23px;
}

.tray-icons svg {
  width: 16px;
  height: 16px;
}

.clock {
  width: 74px;
  line-height: 18px;
  text-align: center;
}

.notices {
  width: 44px;
  height: 40px;
  padding: 8px 0 0 8px;
  border-right: 1px solid #a58486;
}

.notices svg {
  overflow: visible;
}
```
